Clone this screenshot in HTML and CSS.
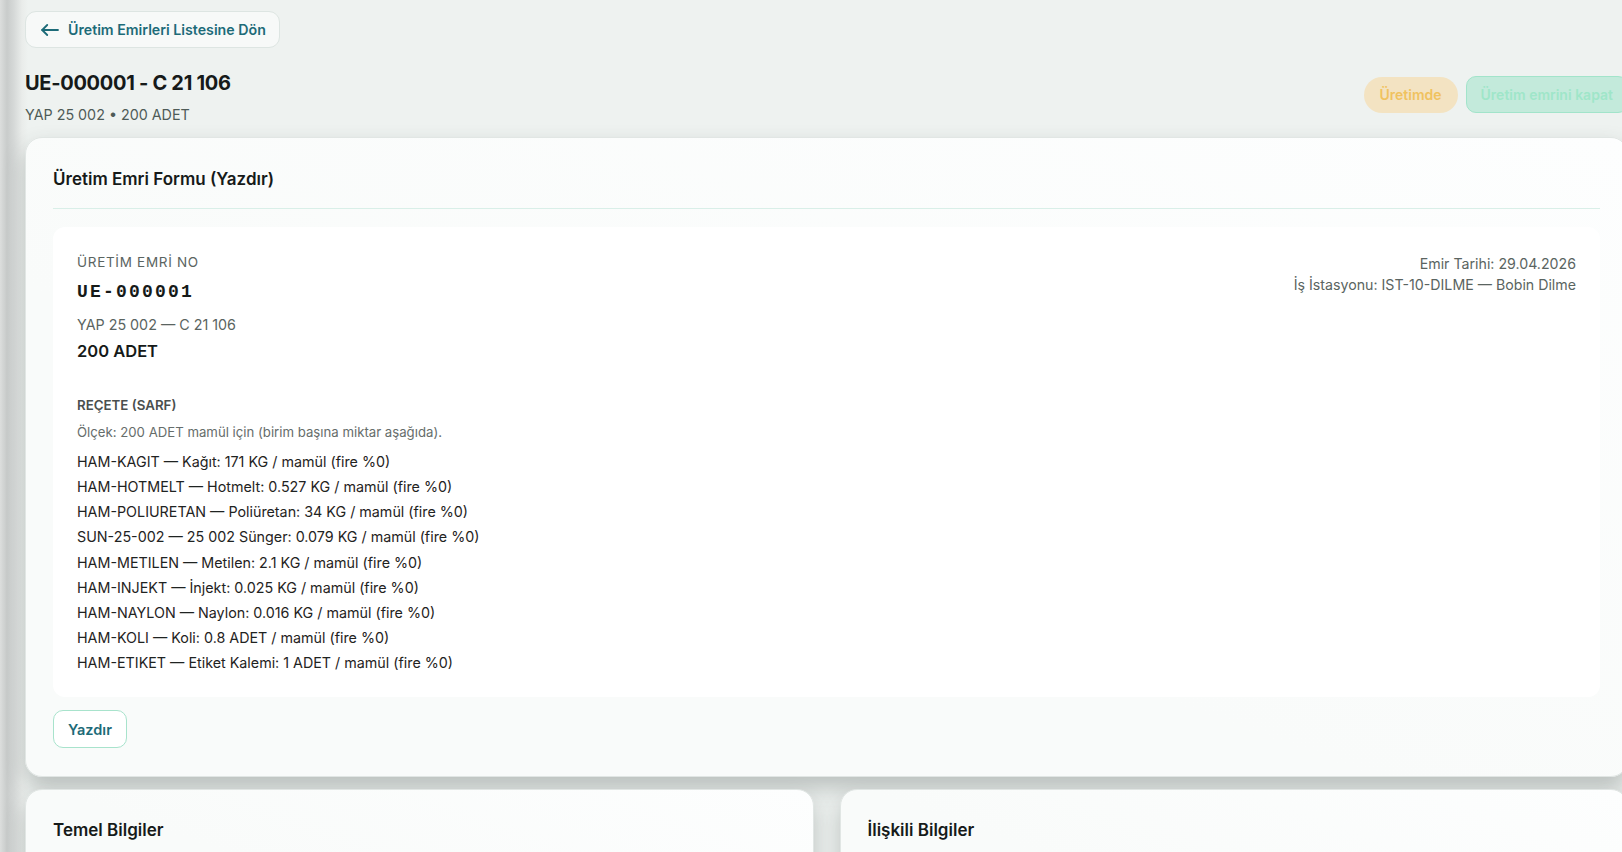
FILE: index.html
```html
<!DOCTYPE html>
<html lang="tr">
<head>
    <meta charset="UTF-8">
    <meta name="viewport" content="width=device-width, initial-scale=1.0">
    <title>Üretim Emri - UE-000001</title>
    <link rel="stylesheet" href="styles.css">
</head>
<body>
    <div class="page">
        <a class="back-btn" href="#">
            <svg class="back-icon" viewBox="0 0 18 12" width="18" height="12" fill="none" stroke="currentColor" stroke-width="1.8" stroke-linecap="round" stroke-linejoin="round">
                <path d="M17 6H1.2"/>
                <path d="M6.2 1L1.2 6l5 5"/>
            </svg>
            Üretim Emirleri Listesine Dön
        </a>

        <div class="header">
            <div>
                <h1 class="title">UE-000001 - C 21 106</h1>
                <div class="subtitle">YAP 25 002 • 200 ADET</div>
            </div>
            <div class="header-actions">
                <span class="status-pill">Üretimde</span>
                <button class="close-btn">Üretim emrini kapat</button>
            </div>
        </div>

        <section class="card">
            <h2 class="card-title">Üretim Emri Formu (Yazdır)</h2>
            <div class="sheet">
                <div class="sheet-top">
                    <div>
                        <div class="sheet-label">ÜRETİM EMRİ NO</div>
                        <div class="sheet-no">UE-000001</div>
                        <div class="sheet-product">YAP 25 002 — C 21 106</div>
                        <div class="sheet-qty">200 ADET</div>
                    </div>
                    <div class="sheet-meta">
                        <div>Emir Tarihi: 29.04.2026</div>
                        <div>İş İstasyonu: IST-10-DILME — Bobin Dilme</div>
                    </div>
                </div>

                <div class="recipe">
                    <div class="recipe-title">REÇETE (SARF)</div>
                    <div class="recipe-note">Ölçek: 200 ADET mamül için (birim başına miktar aşağıda).</div>
                    <ul class="recipe-list">
                        <li>HAM-KAGIT — Kağıt: 171 KG / mamül (fire %0)</li>
                        <li>HAM-HOTMELT — Hotmelt: 0.527 KG / mamül (fire %0)</li>
                        <li>HAM-POLIURETAN — Poliüretan: 34 KG / mamül (fire %0)</li>
                        <li>SUN-25-002 — 25 002 Sünger: 0.079 KG / mamül (fire %0)</li>
                        <li>HAM-METILEN — Metilen: 2.1 KG / mamül (fire %0)</li>
                        <li>HAM-INJEKT — İnjekt: 0.025 KG / mamül (fire %0)</li>
                        <li>HAM-NAYLON — Naylon: 0.016 KG / mamül (fire %0)</li>
                        <li>HAM-KOLI — Koli: 0.8 ADET / mamül (fire %0)</li>
                        <li>HAM-ETIKET — Etiket Kalemi: 1 ADET / mamül (fire %0)</li>
                    </ul>
                </div>
            </div>
            <button class="print-btn">Yazdır</button>
        </section>

        <div class="grid">
            <section class="card card-small">
                <h2 class="card-heading">Temel Bilgiler</h2>
            </section>
            <section class="card card-small">
                <h2 class="card-heading">İlişkili Bilgiler</h2>
            </section>
        </div>
    </div>
</body>
</html>
```

FILE: styles.css
```css
:root {
    --page-bg: #eef2f0;
    --card-bg: #f9fbfa;
    --teal: #1d6b78;
    --text: #161a19;
    --muted: #5a6461;
    --line: #d9efe8;
}
html, body {
    margin: 0;
}
body {
    font-family: 'Inter', 'Noto Sans', sans-serif;
    color: var(--text);
    background:
        linear-gradient(to right, #dcdedd 0, #c9cccb 7px, #d6d9d8 14px, #e9ecea 22px, rgba(238, 242, 240, 0) 28px),
        var(--page-bg);
    min-height: 100vh;
    overflow: hidden;
}
.page {
    width: 1603px;
    padding: 11px 0 0 25px;
}
.back-btn {
    display: inline-flex;
    align-items: center;
    gap: 9px;
    height: 37px;
    box-sizing: border-box;
    padding: 0 13px 0 15px;
    border: 1px solid #dde5e2;
    border-radius: 11px;
    background: rgba(255, 255, 255, 0.55);
    color: var(--teal);
    font-size: 14.2px;
    font-weight: 600;
    text-decoration: none;
}
.back-icon {
    display: block;
}
.header {
    display: flex;
    justify-content: space-between;
    align-items: flex-start;
    margin-top: 22px;
}
.title {
    margin: 0;
    font-size: 20px;
    font-weight: 700;
    line-height: 27px;
    letter-spacing: -0.3px;
}
.subtitle {
    margin-top: 8px;
    font-size: 14.3px;
    line-height: 20px;
    color: #4e5b57;
}
.header-actions {
    display: flex;
    align-items: center;
    gap: 8px;
    margin-top: 6px;
}
.status-pill {
    display: inline-flex;
    align-items: center;
    height: 36px;
    padding: 0 16px;
    border-radius: 18px;
    background: #f3e3c2;
    color: #f0c25f;
    font-size: 14px;
    font-weight: 600;
}
.close-btn {
    height: 37px;
    padding: 0 14px;
    border: 1px solid #a2e4ca;
    border-radius: 10px;
    background: #c3eadb;
    color: #9fe6c9;
    font-family: inherit;
    font-size: 14px;
    font-weight: 600;
}
.card {
    background: linear-gradient(200deg, #fdfefe 0%, var(--card-bg) 60%);
    border: 1px solid #e1e6e4;
    border-radius: 17px;
    box-shadow: 0 11px 22px rgba(50, 60, 56, 0.28);
}
.header + .card {
    margin-top: 12px;
    padding: 31px 27px 28px;
}
.card-title {
    margin: 0;
    padding-bottom: 19px;
    border-bottom: 1px solid var(--line);
    font-size: 17px;
    font-weight: 600;
    line-height: 20px;
}
.sheet {
    margin-top: 18px;
    padding: 26px 24px 22px;
    background: #fff;
    border-radius: 12px;
}
.sheet-top {
    display: flex;
    justify-content: space-between;
}
.sheet-label {
    font-size: 13.5px;
    line-height: 18px;
    letter-spacing: 0.7px;
    color: var(--muted);
}
.sheet-no {
    margin-top: 10px;
    font-family: 'Liberation Mono', 'DejaVu Sans Mono', monospace;
    font-size: 18px;
    font-weight: 700;
    line-height: 22px;
    letter-spacing: 2.2px;
}
.sheet-product {
    margin-top: 12px;
    font-size: 14.3px;
    line-height: 20px;
    color: var(--muted);
}
.sheet-qty {
    margin-top: 4px;
    font-size: 16.5px;
    font-weight: 600;
    line-height: 24px;
}
.sheet-meta {
    text-align: right;
    font-size: 14.2px;
    line-height: 21px;
    color: var(--muted);
}
.recipe {
    margin-top: 33px;
}
.recipe-title {
    font-size: 13.3px;
    font-weight: 600;
    line-height: 18px;
    color: #4a4f4e;
}
.recipe-note {
    margin-top: 9px;
    font-size: 13.2px;
    line-height: 18px;
    color: #666d6b;
}
.recipe-list {
    list-style: none;
    margin: 8px 0 0;
    padding: 0;
    font-size: 14.3px;
    line-height: 25.15px;
    color: #1f2322;
}
.print-btn {
    margin-top: 13px;
    height: 38px;
    padding: 0 14px;
    background: #fff;
    border: 1px solid #a8e3cc;
    border-radius: 10px;
    color: var(--teal);
    font-family: inherit;
    font-size: 14.5px;
    font-weight: 600;
}
.grid {
    display: grid;
    grid-template-columns: 1fr 1fr;
    gap: 26px;
    margin-top: 12px;
}
.card-small {
    padding: 28px 27px;
    min-height: 120px;
}
.card-heading {
    margin: 0;
    font-size: 17px;
    font-weight: 600;
    line-height: 24px;
}
```
